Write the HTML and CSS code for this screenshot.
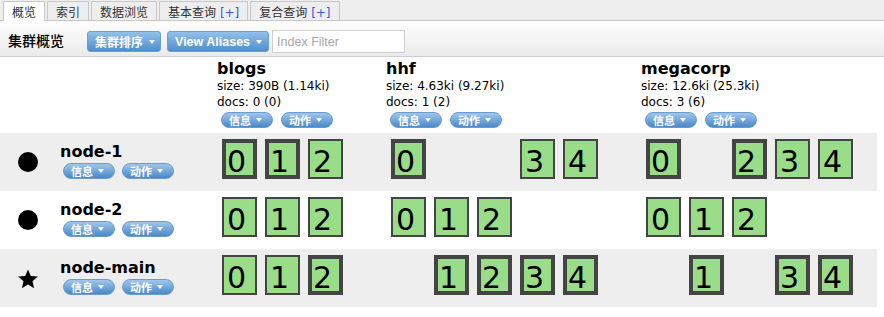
FILE: index.html
```html
<!DOCTYPE html>
<html>
<head>
<meta charset="utf-8">
<link rel="stylesheet" href="styles.css">
</head>
<body>
<div class="tabs">
  <div class="tab active">概览</div>
  <div class="tab">索引</div>
  <div class="tab">数据浏览</div>
  <div class="tab">基本查询 <span class="plus">[+]</span></div>
  <div class="tab">复合查询 <span class="plus">[+]</span></div>
</div>
<div class="toolbar">
  <h2 class="title">集群概览</h2>
  <button class="btn btn-sort">集群排序<i class="caret"></i></button>
  <button class="btn btn-alias">View Aliases<i class="caret"></i></button>
  <input class="filter" type="text" placeholder="Index Filter">
</div>
<div class="overview">
  <div class="grid-row head">
    <div class="cell"></div>
    <div class="cell index">
      <div class="iname">blogs</div>
      <div class="meta">size: 390B (1.14ki)</div>
      <div class="meta">docs: 0 (0)</div>
      <div class="pills"><span class="pill">信息<i class="caret"></i></span><span class="pill">动作<i class="caret"></i></span></div>
    </div>
    <div class="cell index">
      <div class="iname">hhf</div>
      <div class="meta">size: 4.63ki (9.27ki)</div>
      <div class="meta">docs: 1 (2)</div>
      <div class="pills"><span class="pill">信息<i class="caret"></i></span><span class="pill">动作<i class="caret"></i></span></div>
    </div>
    <div class="cell index">
      <div class="iname">megacorp</div>
      <div class="meta">size: 12.6ki (25.3ki)</div>
      <div class="meta">docs: 3 (6)</div>
      <div class="pills"><span class="pill">信息<i class="caret"></i></span><span class="pill">动作<i class="caret"></i></span></div>
    </div>
  </div>

  <div class="grid-row node-row alt">
    <div class="cell node">
      <span class="icon"><span class="dot"></span></span>
      <div class="ninfo">
        <div class="nname">node-1</div>
        <div class="pills"><span class="pill">信息<i class="caret"></i></span><span class="pill">动作<i class="caret"></i></span></div>
      </div>
    </div>
    <div class="cell shards">
      <span class="slot"><span class="shard primary">0</span></span>
      <span class="slot"><span class="shard primary">1</span></span>
      <span class="slot"><span class="shard">2</span></span>
    </div>
    <div class="cell shards">
      <span class="slot"><span class="shard primary">0</span></span>
      <span class="slot"></span>
      <span class="slot"></span>
      <span class="slot"><span class="shard">3</span></span>
      <span class="slot"><span class="shard">4</span></span>
    </div>
    <div class="cell shards">
      <span class="slot"><span class="shard primary">0</span></span>
      <span class="slot"></span>
      <span class="slot"><span class="shard primary">2</span></span>
      <span class="slot"><span class="shard">3</span></span>
      <span class="slot"><span class="shard">4</span></span>
    </div>
  </div>

  <div class="grid-row node-row">
    <div class="cell node">
      <span class="icon"><span class="dot"></span></span>
      <div class="ninfo">
        <div class="nname">node-2</div>
        <div class="pills"><span class="pill">信息<i class="caret"></i></span><span class="pill">动作<i class="caret"></i></span></div>
      </div>
    </div>
    <div class="cell shards">
      <span class="slot"><span class="shard">0</span></span>
      <span class="slot"><span class="shard">1</span></span>
      <span class="slot"><span class="shard">2</span></span>
    </div>
    <div class="cell shards">
      <span class="slot"><span class="shard">0</span></span>
      <span class="slot"><span class="shard">1</span></span>
      <span class="slot"><span class="shard">2</span></span>
    </div>
    <div class="cell shards">
      <span class="slot"><span class="shard">0</span></span>
      <span class="slot"><span class="shard">1</span></span>
      <span class="slot"><span class="shard">2</span></span>
    </div>
  </div>

  <div class="grid-row node-row alt">
    <div class="cell node">
      <span class="icon">
        <svg class="star" width="22" height="22" viewBox="0 0 24 24"><path d="M12 1.6l3.05 7.1 7.7.7-5.85 5.1 1.75 7.55L12 18.1l-6.65 3.95L7.1 14.5 1.25 9.4l7.7-.7z" fill="#000"/></svg>
      </span>
      <div class="ninfo">
        <div class="nname">node-main</div>
        <div class="pills"><span class="pill">信息<i class="caret"></i></span><span class="pill">动作<i class="caret"></i></span></div>
      </div>
    </div>
    <div class="cell shards">
      <span class="slot"><span class="shard">0</span></span>
      <span class="slot"><span class="shard">1</span></span>
      <span class="slot"><span class="shard primary">2</span></span>
    </div>
    <div class="cell shards">
      <span class="slot"></span>
      <span class="slot"><span class="shard primary">1</span></span>
      <span class="slot"><span class="shard primary">2</span></span>
      <span class="slot"><span class="shard primary">3</span></span>
      <span class="slot"><span class="shard primary">4</span></span>
    </div>
    <div class="cell shards">
      <span class="slot"></span>
      <span class="slot"><span class="shard primary">1</span></span>
      <span class="slot"></span>
      <span class="slot"><span class="shard primary">3</span></span>
      <span class="slot"><span class="shard primary">4</span></span>
    </div>
  </div>
</div>
</body>
</html>
```
FILE: styles.css
```css
* { box-sizing: border-box; }

body {
  margin: 0;
  font-family: "DejaVu Sans", "Noto Sans CJK SC", sans-serif;
  font-size: 12px;
  color: #000;
  background: #fff;
}

/* tabs */
.tabs {
  display: flex;
  height: 21px;
  padding: 1px 0 0 3px;
  background: #eee;
  border-bottom: 1px solid #c8c8c8;
}
.tab {
  height: 19px;
  margin-right: 2px;
  padding: 3px 8px 0;
  line-height: 16px;
  border: 1px solid #c8c8c8;
  border-bottom: none;
  background: #eee;
  color: #333;
  font-size: 12px;
  white-space: nowrap;
}
.tab.active {
  height: 20px;
  background: #fff;
}
.plus { color: #3355ee; }

/* toolbar */
.toolbar {
  display: flex;
  align-items: center;
  height: 36px;
  padding: 9px 8px 3px;
  border-bottom: 1px solid #cfcfcf;
  background: linear-gradient(#fefefe, #ebebeb);
}
.title {
  margin: 0 23px 0 0;
  font-size: 14px;
  font-weight: 500;
  line-height: 23px;
  color: #000;
}
.btn {
  display: inline-flex;
  align-items: center;
  gap: 6px;
  height: 21px;
  padding: 0 6px 0 7px;
  border: 1px solid #6b9fd2;
  border-radius: 3px;
  background: linear-gradient(#92c1ea, #4f8ecd);
  color: #fff;
  font: bold 12.5px "Liberation Sans", "Noto Sans CJK SC", sans-serif;
}
.btn-sort { margin-right: 6px; font-size: 12px; padding-right: 5px; }
.btn-alias { margin-right: 3px; }
.caret {
  display: inline-block;
  width: 0;
  height: 0;
  border-left: 3.5px solid transparent;
  border-right: 3.5px solid transparent;
  border-top: 4px solid #fff;
}
.filter {
  width: 133px;
  height: 23px;
  padding: 0 4px;
  border: 1px solid #cfcfcf;
  background: #fff;
  font: 12.5px "Liberation Sans", sans-serif;
  outline: none;
}
.filter::placeholder { color: #a8a8a8; }

/* overview grid */
.grid-row {
  display: grid;
  grid-template-columns: 217px 169px 255px 236px;
  width: 877px;
}
.head { height: 76px; }
.node-row { height: 58px; }
.node-row.alt { background: #eee; }

.index { padding-top: 3px; }
.iname {
  font-size: 16px;
  font-weight: bold;
  line-height: 18px;
}
.meta { line-height: 16px; }

.pills {
  display: flex;
  gap: 8px;
  margin-top: 2px;
  margin-left: 4px;
}
.pill {
  display: inline-flex;
  align-items: center;
  gap: 5px;
  height: 16px;
  padding: 0 10px 0 7px;
  border-radius: 8px;
  border: 1px solid #6a9bcf;
  background: linear-gradient(#a0c6ec, #4a89c9);
  color: #fff;
  font: bold 11px "Noto Sans CJK SC", sans-serif;
  line-height: 14px;
}

.node {
  display: flex;
  padding-left: 17px;
}
.icon {
  display: flex;
  align-items: center;
  justify-content: center;
  width: 22px;
  height: 58px;
}
.dot {
  width: 20px;
  height: 20px;
  border-radius: 50%;
  background: #000;
}
.star { margin-top: 2px; }
.ninfo {
  margin-left: 21px;
  padding-top: 10px;
}
.nname {
  font-size: 16px;
  font-weight: bold;
  line-height: 18px;
}
.ninfo .pills {
  gap: 7px;
  margin-left: 3px;
}

.shards {
  display: flex;
  padding-top: 6px;
}
.slot {
  flex: none;
  width: 43px;
  height: 40px;
}
.shard {
  display: block;
  width: 35px;
  height: 40px;
  margin-left: 5px;
  padding: 6px 0 0 3px;
  border: 2px solid #444;
  background: #99dd88;
  font-size: 30px;
  line-height: 30px;
  color: #000;
}
.shard.primary {
  padding: 4px 0 0 1px;
  border-width: 4px;
}
```
